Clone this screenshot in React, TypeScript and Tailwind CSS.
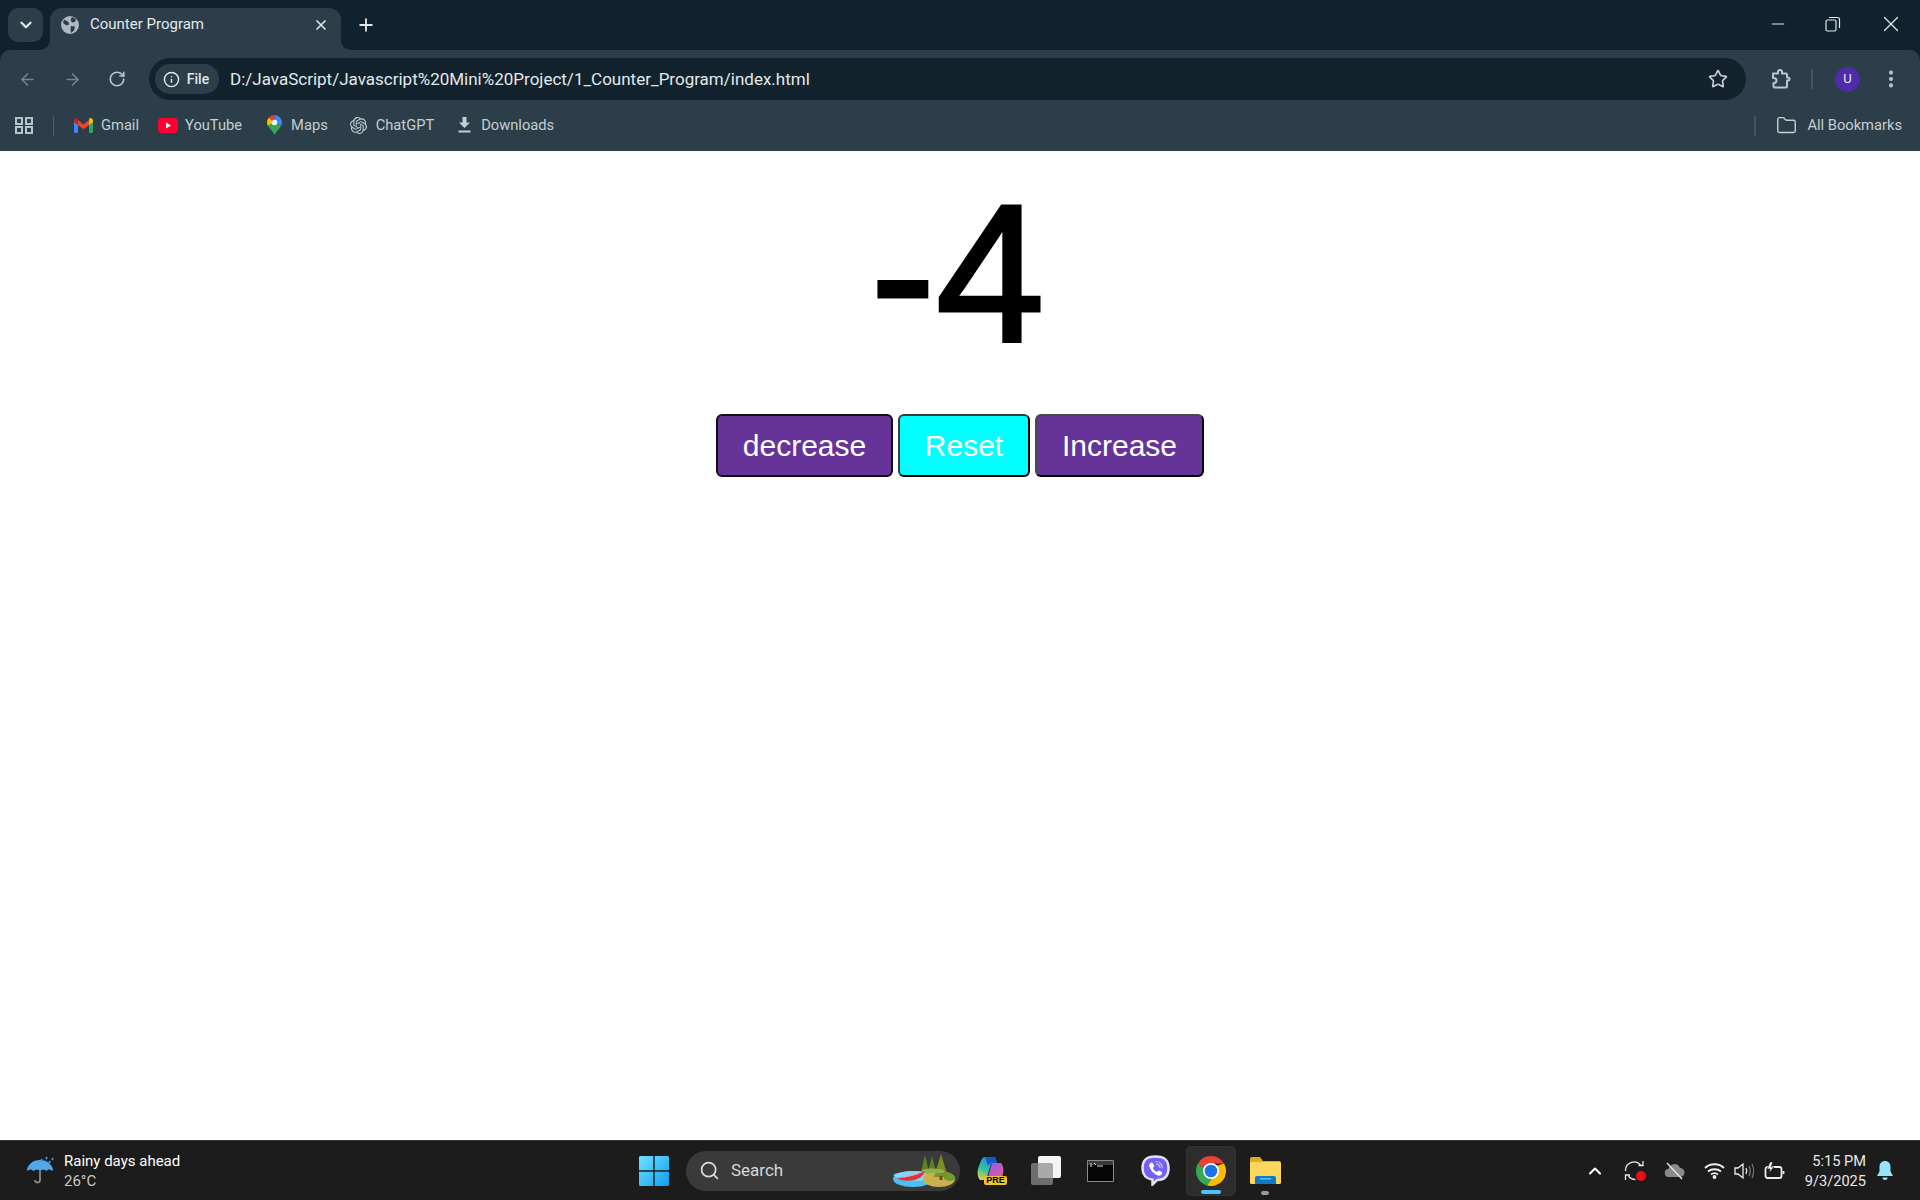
import { SiOpenai } from "react-icons/si";
import { ArrowLeft, ArrowRight, RotateCw, Info, Star, EllipsisVertical, ChevronDown, ChevronUp, Plus, X, Minus, Search, Folder } from "lucide-react";

const uiFont = "font-['Roboto',sans-serif]";

function Globe() {
  return (
    <svg width="18" height="18" viewBox="0 0 18 18">
      <circle cx="9" cy="9" r="9" fill="#aeb9c0" />
      <path d="M3 3.500 7.500 6 8 8.500l-2.500 1L2 7ZM11 1l4 2-1 3-3 .5-1.500-2.500ZM10 10l4 .5-1 4-3 2.500-.5-4Z" fill="#2c3e4a" />
    </svg>
  );
}

function Gmail() {
  return (
    <svg width="19" height="15" viewBox="0 0 19 15">
      <path d="M0 2v11.500A1.500 1.500 0 0 0 1.500 15H4V6Z" fill="#4285f4" />
      <path d="M19 2v11.500a1.500 1.500 0 0 1-1.500 1.500H15V6Z" fill="#34a853" />
      <path d="M4 7V2L9.500 6.500 15 2v5l-5.500 4.300Z" fill="#ea4335" />
      <path d="M0 2.500C0 .5 2.300-.6 3.800.6L4 7 0 4Z" fill="#c5221f" />
      <path d="M19 2.500c0-2-2.300-3.100-3.800-1.900L15 7l4-3Z" fill="#fbbc04" />
    </svg>
  );
}

function YouTube() {
  return (
    <svg width="20" height="15" viewBox="0 0 20 15">
      <rect width="20" height="15" rx="4" fill="#ff0033" />
      <path d="m8 4.500 5 3-5 3Z" fill="#fff" />
    </svg>
  );
}

function Maps() {
  return (
    <svg width="15" height="20" viewBox="0 0 15 20">
      <path d="M7.500 0A7.500 7.500 0 0 1 15 7.500c0 1.300-.3 2.400-.9 3.400L7.500 7.500Z" fill="#4285f4" />
      <path d="M7.500 0A7.500 7.500 0 0 0 1.700 2.700l5.800 4.800Z" fill="#ea4335" />
      <path d="M1.700 2.700A7.500 7.500 0 0 0 0 7.500c0 1.200.3 2.300.9 3.300l6.600-3.300Z" fill="#fbbc04" />
      <path d="M.9 10.800C2.500 14 6 16 7.500 20c1.500-4 5-6 6.600-9.100L7.500 7.500Z" fill="#34a853" />
      <circle cx="7.500" cy="7.500" r="2.700" fill="#fff" />
    </svg>
  );
}

function DownloadIcon() {
  return (
    <svg width="13" height="16" viewBox="0 0 13 16" fill="#c5ced3">
      <path d="M4.500 0h4v5.500H12L6.500 11 1 5.500h3.500Z" />
      <rect x="0.500" y="13.500" width="12" height="2" />
    </svg>
  );
}

function ExtensionIcon() {
  return (
    <svg className="ml-[25px]" width="20" height="20" viewBox="0 0 20 20" fill="none" stroke="#b8c8d1" strokeWidth="2" strokeLinejoin="round">
      <path d="M2 4.500h5V3a2 2 0 0 1 4 0v1.500h4a1 1 0 0 1 1 1V8.500h1a1.500 1.500 0 0 1 0 3h-1v6a1 1 0 0 1-1 1H3.500a1 1 0 0 1-1-1v-3.500h.5a2.500 2.500 0 0 0 0-5H2Z" />
    </svg>
  );
}

function Chrome() {
  return (
    <svg width="30" height="30" viewBox="0 0 30 30">
      <path d="M15 0a15 15 0 0 1 13 7.500H15a7.500 7.500 0 0 0-7 4.800L2.100 7.300A15 15 0 0 1 15 0Z" fill="#ea4335" />
      <path d="M2.100 7.300A15 15 0 0 0 11 29.500l4.800-7.100A7.500 7.500 0 0 1 8 12.300Z" fill="#34a853" />
      <path d="M28 7.500A15 15 0 0 1 11 29.500l5-7.200A7.500 7.500 0 0 0 20.500 10Z" fill="#fbbc04" />
      <circle cx="15" cy="15" r="8" fill="#fff" />
      <circle cx="15" cy="15" r="6.300" fill="#1a73e8" />
    </svg>
  );
}

function Copilot() {
  return (
    <div className="relative h-[28px] w-[30px]">
      <svg width="28" height="24" viewBox="0 0 28 24">
        <defs>
          <linearGradient id="cpA" x1="0.6" y1="0" x2="0.2" y2="1">
            <stop offset="0" stopColor="#1f8fe0" />
            <stop offset="0.55" stopColor="#35c2a0" />
            <stop offset="1" stopColor="#e8d23c" />
          </linearGradient>
          <linearGradient id="cpB" x1="0" y1="0" x2="1" y2="1">
            <stop offset="0" stopColor="#8a5be8" />
            <stop offset="1" stopColor="#f05a9c" />
          </linearGradient>
        </defs>
        <path d="M8 0h10l2 7h-6l-4 13c-.5 2-2 3-4 3H3C0 20 0 13 2 9 3.500 5 5 0 8 0Z" fill="url(#cpA)" />
        <path d="M18 6h6c3 3 3 10 1 14-1 2-2 3-4 3h-9c-1 0-2-1-1-3l3-11c.5-2 2-3 4-3Z" fill="url(#cpB)" />
        <path d="M8 0h8c2 0 3 1 4 6h-5c-2 0-3 1-4 3L8 0Z" fill="#1659cf" />
      </svg>
      <span className="absolute bottom-0 right-0 flex h-[9px] w-[23px] items-center justify-center rounded-[2px] bg-[#f7c325] font-['Liberation_Sans',sans-serif] text-[9px] font-bold leading-none text-black">
        PRE
      </span>
    </div>
  );
}

function Viber() {
  return (
    <svg width="29" height="31" viewBox="0 0 29 31">
      <path d="M14.500 1.500C22 1.500 27.500 3.500 27.500 13c0 9.500-5.500 12-11.500 12l-4.500 4.500V24.800C5 23.500 1.500 20.500 1.500 13c0-9.500 5.500-11.500 13-11.500Z" fill="#7360f2" stroke="#e4e0ff" strokeWidth="2.500" />
      <path d="M9.500 8c1-.8 2-.5 2.500.4l1 1.800c.4.800.2 1.500-.6 2-.6.400-.5.900-.2 1.500.7 1.300 1.600 2.200 2.900 2.900.6.300 1.100.4 1.500-.2.500-.8 1.200-1 2-.6l1.800 1c.9.500 1.200 1.500.4 2.500-1 1.200-2.300 1.700-3.700 1.200-4.100-1.600-7-4.500-8.600-8.600C7.800 10.300 8.300 9 9.500 8Z" fill="#fff" />
      <path d="M15 6.500c3.500.3 6 2.800 6.300 6.300M15.500 9c2 .2 3.300 1.500 3.500 3.500" fill="none" stroke="#cfc8ff" strokeWidth="1.200" strokeLinecap="round" />
    </svg>
  );
}

function FileExplorer() {
  return (
    <svg width="31" height="27" viewBox="0 0 31 27">
      <path d="M0 2a2 2 0 0 1 2-2h8l3 4h16a2 2 0 0 1 2 2v4H0Z" fill="#e5a823" />
      <rect y="5" width="31" height="22" rx="1.500" fill="#fdd65c" />
      <path d="M5 21a2 2 0 0 1 2-2h17a2 2 0 0 1 2 2v6H5Z" fill="#1177c9" />
      <rect x="10" y="21" width="11" height="1.500" fill="#5cc4f5" />
    </svg>
  );
}

function SearchArt() {
  return (
    <svg className="mr-[4px]" width="64" height="34" viewBox="0 0 64 34">
      <ellipse cx="21" cy="25" rx="20" ry="8" fill="#4cc0f0" />
      <path d="M1 21c8-4 20-5 33-3v8c-10 2-26 1-33-5Z" fill="#7fd6f5" />
      <ellipse cx="47" cy="25" rx="16" ry="8" fill="#c9b24c" />
      <path d="M52 18a10 7 0 0 1 11 7c-3 3-8 2-11 0Z" fill="#6f9a33" />
      <path d="M33 1l4 17h-8ZM40 2l4 16h-8Z" fill="#5f7f24" />
      <path d="M49 0l7 23H42Z" fill="#7d8f1f" />
      <rect x="47.500" y="22" width="3" height="4" fill="#6c4a1f" />
      <path d="M30 16c5-2 14-2 22 0v3H30Z" fill="#8fb04a" />
      <path d="M5 24C14 24 25 21 33 17c-1 5-7 9-14 9.500-6 .5-11 0-14-2.500Z" fill="#e0303f" />
      <path d="M12 23c5-1 10-2 15-4" stroke="#f7a0a0" strokeWidth="1" fill="none" />
    </svg>
  );
}

function Bookmark({ icon, label, cls }: { icon: React.ReactNode; label: string; cls: string }) {
  return (
    <div className={`flex items-center ${cls}`}>
      {icon}
      <span>{label}</span>
    </div>
  );
}

function Counter() {
  return (
    <main className="min-h-0 flex-1 bg-white pt-[9px] text-center font-['Liberation_Sans',sans-serif]">
      <h1 className="pr-[5px] text-[196px] font-normal leading-[230px] text-black [-webkit-text-stroke:3px_#000]">-4</h1>
      <div className="mt-[24px] flex justify-center gap-[5px] text-[30px] leading-[34px] text-white">
        <button className="h-[63px] w-[177px] rounded-[6px] border-2 border-[#111014] bg-[#663399]">decrease</button>
        <button className="h-[63px] w-[132px] rounded-[6px] border-2 border-[#3c3c3c] border-b-black border-r-black bg-[#00ffff]">Reset</button>
        <button className="h-[63px] w-[169px] rounded-[6px] border-2 border-[#484848] border-b-black border-r-black bg-[#663399]">Increase</button>
      </div>
    </main>
  );
}

export default function App() {
  return (
    <div className={`flex h-screen w-full flex-col overflow-hidden bg-[#10222d] ${uiFont}`}>
      {/* tab strip */}
      <header className="flex h-[50px] shrink-0 items-end bg-[#10222d] text-[#e3e8eb]">
        <div className="ml-[8px] mt-[8px] flex h-[34px] w-[35px] items-center justify-center self-start rounded-[10px] bg-[#2c3e4a]">
          <ChevronDown size={18} strokeWidth={3} />
        </div>
        <div className="relative ml-[7px] flex h-[42px] w-[291px] items-center rounded-t-[12px] bg-[#2c3e4a] pb-[9px] pl-[11px] pr-[12px]">
          <svg className="absolute bottom-0 left-[-10px]" width="10" height="10" viewBox="0 0 10 10">
            <path d="M10 0v10H0A10 10 0 0 0 10 0Z" fill="#2c3e4a" />
          </svg>
          <svg className="absolute bottom-0 right-[-10px]" width="10" height="10" viewBox="0 0 10 10">
            <path d="M0 0v10h10A10 10 0 0 1 0 0Z" fill="#2c3e4a" />
          </svg>
          <Globe />
          <span className="ml-[11px] flex-1 text-[15px]">Counter Program</span>
          <X size={16} strokeWidth={2.5} />
        </div>
        <div className="mb-[15px] ml-[15px] flex items-center">
          <Plus size={20} strokeWidth={2.2} />
        </div>
        <div className="mb-[13px] ml-auto flex items-center gap-[37px] pr-[16px]">
          <Minus size={20} strokeWidth={1.2} />
          <svg width="16" height="16" viewBox="0 0 16 16" fill="none" stroke="currentColor" strokeWidth="1.200">
            <rect x="1" y="4" width="10" height="11" rx="1.500" />
            <path d="M4 1.500h8.500a2 2 0 0 1 2 2V12" />
          </svg>
          <X size={26} strokeWidth={1.2} />
        </div>
      </header>

      {/* toolbar */}
      <div className="flex h-[50px] shrink-0 items-center rounded-t-[10px] bg-[#2c3e4a] pt-[8px]">
        <ArrowLeft className="ml-[18px] text-[#76848d]" size={19} />
        <ArrowRight className="ml-[26px] text-[#76848d]" size={19} />
        <RotateCw className="ml-[26px] text-[#b8c4cb]" size={18} strokeWidth={2.2} />
        <div className="ml-[23px] flex h-[42px] w-[1597px] items-center rounded-full bg-[#12232d] pl-[6px] pr-[18px] text-[#e3e8eb]">
          <div className="flex h-[30px] w-[64px] items-center justify-center gap-[7px] rounded-full bg-[#2c3e4a] pr-[2px] text-[14px] font-medium">
            <Info size={17} />
            File
          </div>
          <span className="ml-[11px] flex-1 pt-[1px] text-[17px]">D:/JavaScript/Javascript%20Mini%20Project/1_Counter_Program/index.html</span>
          <Star className="text-[#c5ced3]" size={20} strokeWidth={2} />
        </div>
        <ExtensionIcon />
        <span className="ml-[20px] h-[20px] w-[2px] bg-[#44555f]" />
        <div className="ml-[22px] flex h-[25px] w-[25px] items-center justify-center rounded-full bg-[#4f2ba8] text-[13px] text-[#e3e8eb]">U</div>
        <EllipsisVertical className="ml-[20px] text-[#b8c8d1]" size={22} strokeWidth={2.5} />
      </div>

      {/* bookmarks bar */}
      <nav className="flex h-[51px] shrink-0 items-center bg-[#2c3e4a] text-[14.7px] text-[#c5ced3]">
        <svg className="ml-[15px]" width="18" height="17" viewBox="0 0 18 17" fill="none" stroke="#b8c4cb" strokeWidth="2">
          <rect x="1" y="1" width="6" height="6" />
          <rect x="11" y="1" width="6" height="6" />
          <rect x="1" y="10" width="6" height="6" />
          <rect x="11" y="10" width="6" height="6" />
        </svg>
        <span className="ml-[20px] h-[20px] w-[1px] bg-[#4f5f69]" />
        <Bookmark icon={<Gmail />} label="Gmail" cls="ml-[20px] gap-[8px]" />
        <Bookmark icon={<YouTube />} label="YouTube" cls="ml-[19px] gap-[7px]" />
        <Bookmark icon={<Maps />} label="Maps" cls="ml-[25px] gap-[9px]" />
        <Bookmark icon={<SiOpenai size={17} color="#c5ced3" />} label="ChatGPT" cls="ml-[22px] gap-[9px]" />
        <Bookmark icon={<DownloadIcon />} label="Downloads" cls="ml-[24px] gap-[10px]" />
        <span className="ml-auto h-[20px] w-[2px] bg-[#44555f]" />
        <div className="ml-[20px] mr-[18px] flex items-center gap-[10px]">
          <Folder size={21} strokeWidth={1.6} />
          All Bookmarks
        </div>
      </nav>

      <Counter />

      {/* windows taskbar */}
      <footer className="relative flex h-[60px] shrink-0 items-center border-t border-[#333] bg-[#1c1c1c] text-white">
        <svg className="ml-[25px]" width="30" height="30" viewBox="0 0 30 30">
          <path d="M2 15a13 11 0 0 1 26 0c-4-2-5-2-6.500 0-2-2-4-2-6.500 0-2-2-4.500-2-6.500 0C6.500 13 5 13 2 15Z" fill="#4fa8ec" />
          <path d="M15 15v9a2.500 2.500 0 0 1-5 0" fill="none" stroke="#888" strokeWidth="1.800" />
          <path d="M17 3l-1 2M22 1l-1 2M25 5l-1 2M28 2l-1 2" stroke="#3e9ad9" strokeWidth="1.800" />
        </svg>
        <div className="ml-[9px] text-[15px] leading-[20px]">
          <div>Rainy days ahead</div>
          <div className="text-[#c8c8c8]">26°C</div>
        </div>

        <div className="absolute left-[639px] top-0 flex h-full items-center">
          <svg width="30" height="30" viewBox="0 0 30 30">
            <defs>
              <linearGradient id="win" x1="0" y1="0" x2="1" y2="1">
                <stop offset="0" stopColor="#6fe3ff" />
                <stop offset="1" stopColor="#0f9ded" />
              </linearGradient>
            </defs>
            <path d="M0 1.500A1.500 1.500 0 0 1 1.500 0h12.800v14.300H0ZM15.700 0h12.800A1.500 1.500 0 0 1 30 1.500v12.800H15.700ZM0 15.700h14.300V30H1.500A1.500 1.500 0 0 1 0 28.500ZM15.700 15.700H30v12.800a1.500 1.500 0 0 1-1.500 1.500H15.700Z" fill="url(#win)" />
          </svg>
          <div className="ml-[17px] flex h-[40px] w-[274px] items-center justify-between rounded-full bg-[#3a3a3a] pl-[13px] text-[#d8d8d8]">
            <div className="flex items-center gap-[11px] text-[17px]">
              <Search size={21} strokeWidth={2} />
              Search
            </div>
            <SearchArt />
          </div>
          <div className="ml-[17px]"><Copilot /></div>
          <svg className="ml-[24px]" width="30" height="29" viewBox="0 0 30 29">
            <rect x="0" y="7" width="22" height="22" rx="2" fill="#6d6d6d" />
            <rect x="7" y="0" width="23" height="22" rx="2" fill="#f4f4f4" />
            <path d="M7 7h13a2 2 0 0 1 2 2v13H9a2 2 0 0 1-2-2Z" fill="#a9a9a9" />
          </svg>
          <svg className="ml-[26px]" width="27" height="22" viewBox="0 0 27 22">
            <rect width="27" height="22" rx="1" fill="#8a8a8a" />
            <rect x="1" y="1" width="25" height="4" fill="#3a3a3a" />
            <rect x="1" y="5" width="25" height="16" fill="#050505" />
            <path d="M3 4h2M3 6h2M7 3l2 2M10 6h6" stroke="#ddd" strokeWidth="1" />
          </svg>
          <div className="ml-[27px]"><Viber /></div>
          <div className="relative ml-[16px] flex h-[50px] w-[50px] items-center justify-center rounded-[5px] border border-[#333] bg-[#2d2d2d]">
            <Chrome />
            <span className="absolute bottom-[1px] left-[14px] h-[4px] w-[20px] rounded-full bg-[#4cc2ff]" />
          </div>
          <div className="relative ml-[14px] flex h-[50px] items-center">
            <FileExplorer />
            <span className="absolute bottom-[1px] left-[11px] h-[4px] w-[8px] rounded-full bg-[#9a9a9a]" />
          </div>
        </div>

        <div className="ml-auto flex items-center">
          <ChevronUp size={20} strokeWidth={2.5} />
          <div className="relative ml-[19px]">
            <svg width="21" height="21" viewBox="0 0 21 21" fill="none" stroke="#e8e8e8" strokeWidth="1.300">
              <path d="M1.500 11a8.500 8.500 0 0 1 15-6M19 1v4.500h-4.500M4.500 16c1.500 2 4 3.500 7 3.500M1.500 20v-5h4.500" />
            </svg>
            <span className="absolute bottom-[0px] right-[-1px] h-[10px] w-[10px] rounded-full bg-[#f20d16]" />
          </div>
          <svg className="ml-[19px]" width="21" height="18" viewBox="0 0 21 18">
            <path d="M5 15a4 4 0 0 1-.5-8A6 6 0 0 1 16 6a4.500 4.500 0 0 1 0 9Z" fill="#8a8a8a" />
            <path d="M3 1l15 16" stroke="#e8e8e8" strokeWidth="1.300" />
          </svg>
          <svg className="ml-[19px]" width="21" height="17" viewBox="0 0 21 17" fill="none" stroke="#eee" strokeWidth="1.800">
            <path d="M1 6c5-5 14-5 19 0M4 9.500c3.500-3 9.500-3 13 0M7 12.500c2-1.500 5-1.500 7 0" />
            <circle cx="10.500" cy="15" r="1" fill="#eee" />
          </svg>
          <svg className="ml-[9px]" width="21" height="18" viewBox="0 0 21 18" fill="none" stroke="#eee" strokeWidth="1.300">
            <path d="M1 6v6h3l5 4V2L4 6Z" />
            <path d="M12 6c1 2 1 4 0 6" />
            <path d="M15 4c1.500 3 1.500 7 0 10M18 2c2 4 2 10 0 14" stroke="#777" />
          </svg>
          <svg className="ml-[9px]" width="21" height="18" viewBox="0 0 21 18" fill="none" stroke="#eee" strokeWidth="1.800">
            <rect x="1.500" y="5" width="16" height="11" rx="2" />
            <path d="M19.500 9v3" />
            <path d="M6 0 3 7h3l-1 4 5-6H7l2-5Z" fill="#eee" stroke="#1c1c1c" strokeWidth="0.600" />
          </svg>
          <div className="ml-[20px] text-right text-[14.6px] leading-[20px] text-[#e8e8e8]">
            <div>5:15 PM</div>
            <div>9/3/2025</div>
          </div>
          <svg className="ml-[11px] mr-[27px]" width="16" height="20" viewBox="0 0 16 20" fill="#94e4fb">
            <path d="M8 0c3.500 0 5.500 2.500 5.500 6v4.500L16 15H0l2.500-4.500V6C2.500 2.500 4.500 0 8 0Z" />
            <path d="M5.500 16.500h5a2.500 2.500 0 0 1-5 0Z" />
          </svg>
        </div>
      </footer>
    </div>
  );
}
